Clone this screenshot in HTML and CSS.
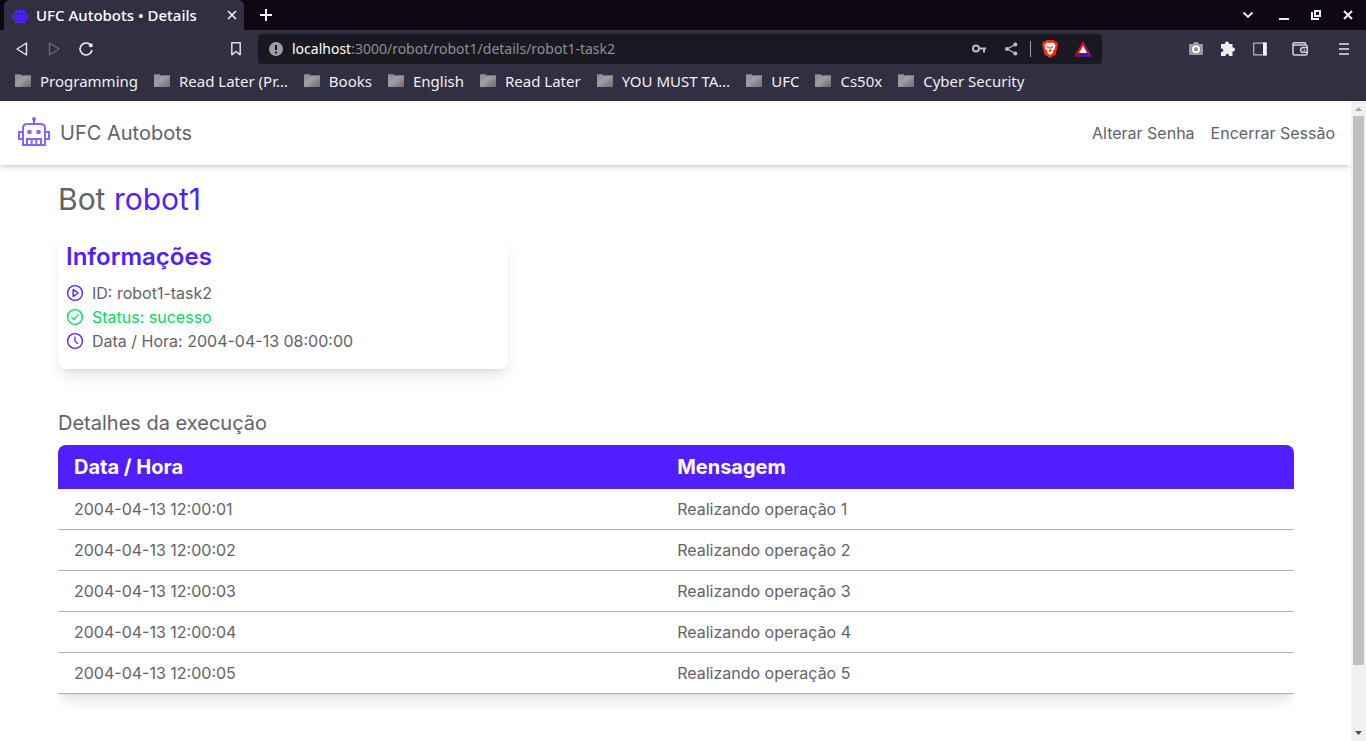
FILE: index.html
```html
<!DOCTYPE html>
<html lang="pt-BR">
<head>
<meta charset="utf-8">
<meta name="viewport" content="width=device-width, initial-scale=1">
<title>UFC Autobots • Details</title>
<link rel="stylesheet" href="styles.css">
</head>
<body>
<svg class="defs" width="0" height="0" aria-hidden="true">
  <defs>
    <linearGradient id="folder-fill" x1="0" y1="0" x2="1" y2="1">
      <stop offset="0" stop-color="#8b8993"/><stop offset=".45" stop-color="#a09da4"/><stop offset="1" stop-color="#6d6b6c"/>
    </linearGradient>
    <symbol id="folder" viewBox="0 0 18 16">
      <path d="M1 1h6v1h10v12H1z" fill="url(#folder-fill)"/>
      <path d="M1 1.500h6M7 2.500h10" stroke="#77757c"/>
    </symbol>
  </defs>
</svg>

<header class="browser">
  <div class="tabstrip">
    <div class="tab">
      <svg class="tab-icon" width="16" height="16" viewBox="0 0 16 16" fill="#4f20ff"><path d="M7.500 0h1v3H12q1 0 1 1v12H3V4q0-1 1-1h3.500zM0 7h1.200v5H0zM14.800 7H16v5h-1.200zM1 6h1v7H1zM14 6h1v7h-1z"/><path d="M5 6h2v2H5zM9 6h2v2H9zM5 10h1v1H5zM7 10h2v1H7zM10 10h1v1h-1zM5 13h1v1H5zM7.500 13h1v1h-1zM10 13h1v1h-1z" fill="#302080"/></svg>
      <span class="tab-title">UFC Autobots • Details</span>
      <button class="icon-btn" aria-label="Close tab"><svg width="10" height="10" viewBox="0 0 10 10" stroke="#f1f1f3" stroke-width="1.600"><path d="M1 1l8 8M9 1L1 9"/></svg></button>
    </div>
    <button class="icon-btn new-tab" aria-label="New tab"><svg width="12" height="12" viewBox="0 0 12 12" stroke="#fff" stroke-width="2"><path d="M6 0v12M0 6h12"/></svg></button>
    <div class="window-controls">
      <button class="icon-btn" aria-label="Search tabs"><svg width="12" height="12" viewBox="0 0 12 12" fill="none" stroke="#eee" stroke-width="1.800"><path d="M1.500 3.500L6 8l4.500-4.500"/></svg></button>
      <button class="icon-btn" aria-label="Minimize"><svg width="12" height="12" viewBox="0 0 12 12" fill="#eee"><path d="M1 9h10v2H1z"/></svg></button>
      <button class="icon-btn" aria-label="Restore"><svg width="12" height="12" viewBox="0 0 12 12" fill="none" stroke="#eee"><path d="M5 2h5v5H5z" stroke-width="2"/><path d="M2 3v7h7" stroke-width="2"/></svg></button>
      <button class="icon-btn" aria-label="Close window"><svg width="12" height="12" viewBox="0 0 12 12" stroke="#eee" stroke-width="2"><path d="M2 2l8 8M10 2l-8 8"/></svg></button>
    </div>
  </div>

  <div class="toolbar">
    <div class="nav-buttons">
      <button class="icon-btn" aria-label="Back"><svg width="16" height="16" viewBox="0 0 16 16" fill="none" stroke="#ececee" stroke-width="1.400" stroke-linejoin="round"><path d="M12.500 2v12L3 8z"/></svg></button>
      <button class="icon-btn" aria-label="Forward"><svg width="16" height="16" viewBox="0 0 16 16" fill="none" stroke="#6c6b78" stroke-width="1.400" stroke-linejoin="round"><path d="M3.500 2v12L13 8z"/></svg></button>
      <button class="icon-btn" aria-label="Reload"><svg width="16" height="16" viewBox="0 0 16 16" fill="none" stroke="#ececee" stroke-width="1.600"><path d="M11.700 3.200A6 6 0 1 0 14 9"/><circle cx="12.800" cy="4.200" r="2" fill="#ececee" stroke="none"/></svg></button>
    </div>
    <button class="icon-btn" aria-label="Bookmark"><svg width="16" height="16" viewBox="0 0 16 16" fill="none" stroke="#dedee2" stroke-width="1.500" stroke-linejoin="round"><path d="M3.800 1.800h8.400v12L8 10.500l-4.200 3.300z"/></svg></button>
    <div class="address">
      <svg width="14" height="14" viewBox="0 0 14 14"><circle cx="7" cy="7" r="7" fill="#9aa0a8"/><path d="M6 3h2v5H6zM6 9.500h2v2H6z" fill="#1a1921"/></svg>
      <span class="url"><b>localhost</b>:3000/robot/robot1/details/robot1-task2</span>
      <button class="icon-btn" aria-label="Passwords"><svg width="16" height="16" viewBox="0 0 16 16"><circle cx="5" cy="7.500" r="3" fill="none" stroke="#bdbdc1" stroke-width="2"/><path d="M8 6.500h7v2h-1v3h-2v-3H8z" fill="#bdbdc1"/></svg></button>
      <button class="icon-btn" aria-label="Share"><svg width="16" height="16" viewBox="0 0 16 16" fill="#bdbdc1"><path d="M12.500 3.500L4 8l8.500 4.500" fill="none" stroke="#bdbdc1" stroke-width="1.200"/><circle cx="12.300" cy="3.500" r="2"/><circle cx="4" cy="8" r="2"/><circle cx="12.300" cy="12.500" r="2"/></svg></button>
      <span class="divider"></span>
      <button class="icon-btn" aria-label="Brave Shields"><svg width="16" height="18" viewBox="0 0 16 18"><path d="M4.500 0h7L13 1.600l1.500-.2L16 4l-.7 2 .2 1-2 7.500L8 18l-5.500-3.500L.5 7l.2-1L0 4l1.500-2.600 1.500.2z" fill="#fb2b0a"/><path d="M5 2.500L8 3l3-.5L13.500 5l-.8 4-2 2 .3 1.500L8 15l-3-2.500.3-1.500-2-2-.8-4z" fill="#fff"/><path d="M4 6l3 .8-.5 1.600zM12 6l-3 .8.500 1.600zM7.300 7h1.400l-.3 2.500L9.700 11 8 12l-1.700-1 1.300-1.500z" fill="#fb2b0a"/></svg></button>
      <button class="icon-btn rewards" aria-label="Brave Rewards"><svg width="18" height="16" viewBox="0 0 18 16"><path d="M9 0L0 16l5.500-4L9 5z" fill="#f00"/><path d="M9 0v5l3.500 7 5.500 4z" fill="#9e1f63"/><path d="M0 16l5.500-4h7l5.500 4z" fill="#4b1690"/><path d="M9 4.800L13 12H5z" fill="#fff"/></svg></button>
    </div>
    <div class="extensions">
      <button class="icon-btn" aria-label="Screenshot"><svg width="16" height="16" viewBox="0 0 16 16"><path d="M2 3h3l1-2h4l1 2h3q1 0 1 1v9q0 1-1 1H2q-1 0-1-1V4q0-1 1-1z" fill="#98989c"/><circle cx="8" cy="8.300" r="3" fill="#8a8a8e" stroke="#f5f5f5" stroke-width="2"/></svg></button>
      <button class="icon-btn" aria-label="Extensions"><svg width="16" height="16" viewBox="0 0 16 16" fill="#eee"><path d="M1 3h4V2.600a2 2 0 0 1 4 0V3h3.500v3.500h.5a2 2 0 0 1 0 4h-.5V15H9v-.6a1.700 1.700 0 0 0-3.400 0v.6H1v-4h.6a1.800 1.800 0 0 0 0-3.600H1z"/></svg></button>
      <button class="icon-btn" aria-label="Side panel"><svg width="16" height="16" viewBox="0 0 16 16"><path d="M1.700 2.200h12.600v11.600H1.700z" fill="none" stroke="#b9b8bd" stroke-width="1.200"/><path d="M11 1.500h3.500v13H11z" fill="#f3f3f3"/></svg></button>
      <button class="icon-btn wallet" aria-label="Wallet"><svg width="16" height="16" viewBox="0 0 16 16" fill="none" stroke="#d2d1d6" stroke-width="1.500"><path d="M1 4V3q0-1.300 1.300-1.300h10.200q1 0 1 1V4M1 4h12.500q1.700 0 1.700 1.500v7q0 1.500-1.500 1.500H2.500Q1 14 1 12.500V3M15.200 6.500H11a2.400 2.400 0 0 0 0 4.800h4.200M11.500 8.900h1.500"/></svg></button>
      <button class="icon-btn menu" aria-label="Menu"><svg width="10" height="12" viewBox="0 0 10 12" stroke="#e7e7ea" stroke-width="1.500"><path d="M0 1h10M0 6h10M0 11h10"/></svg></button>
    </div>
  </div>

  <nav class="bookmarks" aria-label="Bookmarks">
    <button class="bookmark"><svg width="18" height="16"><use href="#folder"/></svg>Programming</button>
    <button class="bookmark"><svg width="18" height="16"><use href="#folder"/></svg>Read Later (Pr…</button>
    <button class="bookmark"><svg width="18" height="16"><use href="#folder"/></svg>Books</button>
    <button class="bookmark"><svg width="18" height="16"><use href="#folder"/></svg>English</button>
    <button class="bookmark"><svg width="18" height="16"><use href="#folder"/></svg>Read Later</button>
    <button class="bookmark"><svg width="18" height="16"><use href="#folder"/></svg>YOU MUST TA…</button>
    <button class="bookmark"><svg width="18" height="16"><use href="#folder"/></svg>UFC</button>
    <button class="bookmark"><svg width="18" height="16"><use href="#folder"/></svg>Cs50x</button>
    <button class="bookmark"><svg width="18" height="16"><use href="#folder"/></svg>Cyber Security</button>
  </nav>
</header>

<div class="viewport">
  <div class="page">
    <header class="site-header">
      <a class="brand" href="#">
        <svg width="32" height="32" viewBox="0 0 32 32" fill="none" stroke="#8763ff" stroke-width="2"><path d="M5 28V11q0-4 4.500-4h13Q27 7 27 11v17zM16 7V2M4.500 15H1v7h3.500M27.500 15H31v7h-3.500"/><path d="M9 28v-6h14v6M13.700 22v6M18.300 22v6"/><g fill="#8763ff" stroke="none"><circle cx="16" cy="2" r="2"/><circle cx="11.500" cy="15" r="2.300"/><circle cx="20.500" cy="15" r="2.300"/></g></svg>
        <span>UFC Autobots</span>
      </a>
      <nav class="site-nav">
        <a href="#">Alterar Senha</a>
        <a href="#">Encerrar Sessão</a>
      </nav>
    </header>

    <main class="content">
      <h1 class="title">Bot <span class="accent">robot1</span></h1>

      <section class="card">
        <h2>Informações</h2>
        <ul class="facts">
          <li><svg width="18" height="18" viewBox="0 0 18 18" fill="none" stroke="#511fff" stroke-width="1.400"><circle cx="9" cy="9" r="7.400"/><path d="M7.200 5.600v6.800l5-3.400z" stroke-linejoin="round"/></svg>ID: robot1-task2</li>
          <li class="success"><svg width="18" height="18" viewBox="0 0 18 18" fill="none" stroke="#06d85f" stroke-width="1.400"><circle cx="9" cy="9" r="7.400"/><path d="M5.500 9l2.500 2.600 4.500-5.200" stroke-width="1.200"/></svg>Status: sucesso</li>
          <li><svg width="18" height="18" viewBox="0 0 18 18" fill="none" stroke="#511fff" stroke-width="1.400"><circle cx="9" cy="9" r="7.400"/><path d="M9 4.500V9l2.800 2.800" stroke-width="1.200"/></svg>Data / Hora: 2004-04-13 08:00:00</li>
        </ul>
      </section>

      <section class="details">
        <h2>Detalhes da execução</h2>
        <div class="table-wrap">
          <table>
            <thead>
              <tr><th class="col-date" scope="col">Data / Hora</th><th scope="col">Mensagem</th></tr>
            </thead>
            <tbody>
              <tr><td>2004-04-13 12:00:01</td><td>Realizando operação 1</td></tr>
              <tr><td>2004-04-13 12:00:02</td><td>Realizando operação 2</td></tr>
              <tr><td>2004-04-13 12:00:03</td><td>Realizando operação 3</td></tr>
              <tr><td>2004-04-13 12:00:04</td><td>Realizando operação 4</td></tr>
              <tr><td>2004-04-13 12:00:05</td><td>Realizando operação 5</td></tr>
            </tbody>
          </table>
        </div>
      </section>
    </main>
  </div>

  <div class="scrollbar" aria-hidden="true">
    <svg width="15" height="15" viewBox="0 0 15 15"><path d="M4 10h7L7.500 6z" fill="#a3a3a3"/></svg>
    <div class="scroll-track"><div class="scroll-thumb"></div></div>
    <svg width="15" height="15" viewBox="0 0 15 15"><path d="M4 5h7L7.500 9z" fill="#505050"/></svg>
  </div>
</div>
</body>
</html>
```

FILE: styles.css
```css
* { box-sizing: border-box; }

body {
  margin: 0;
  min-height: 100vh;
  display: flex;
  flex-direction: column;
  background: #fff;
  color: #636367;
  font: 400 16px/24px Inter, "Liberation Sans", sans-serif;
}

h1, h2, ul { margin: 0; padding: 0; }
a { color: inherit; text-decoration: none; }
svg { display: block; flex: none; }
.defs { position: absolute; }

/* Browser frame */
.browser {
  background: #322f42;
  border-bottom: 1px solid #2c293b;
  color: #f0f0f2;
  font: 400 14px/20px "Noto Sans", "Open Sans", sans-serif;
}

.icon-btn {
  display: flex;
  align-items: center;
  justify-content: center;
  padding: 0;
  border: 0;
  background: none;
}

.tabstrip {
  display: flex;
  align-items: center;
  height: 30px;
  padding-left: 4px;
  background: #0d0714;
}

.tab {
  display: flex;
  align-items: center;
  align-self: stretch;
  gap: 8px;
  width: 240px;
  padding: 0 7px 0 8px;
  border-radius: 6px 6px 0 0;
  background: #322f42;
}

.tab-title {
  flex: 1;
  color: #fff;
  font-size: 15px;
  font-weight: 500;
  white-space: nowrap;
}
.new-tab { margin-left: 16px; }

.window-controls {
  display: flex;
  gap: 20px;
  margin-left: auto;
  padding-right: 12px;
}
.window-controls .icon-btn:first-child { margin-right: 4px; }

.toolbar {
  display: flex;
  align-items: center;
  padding: 4px 17px 3px 14px;
}

.nav-buttons { display: flex; gap: 16px; width: 214px; }

.address {
  display: flex;
  flex: 1;
  align-items: center;
  gap: 16px;
  height: 30px;
  margin-left: 14px;
  padding: 0 10px 0 11px;
  border-radius: 4px;
  background: #1a1921;
}

.url {
  flex: 1;
  margin-left: -7px;
  color: #8e8e96;
  white-space: nowrap;
}
.url b { font-weight: 400; color: #fff; }
.divider { width: 1px; height: 16px; margin: 0 -5px; background: #a3a3a9; }

.extensions {
  display: flex;
  align-items: center;
  gap: 16px;
  margin-left: 86px;
}
.wallet { margin-left: 8px; }
.menu { margin-left: 15px; }

.bookmarks {
  display: flex;
  gap: 15px;
  padding: 4px 14px 9px;
  font-size: 15px;
}

.bookmark {
  display: flex;
  align-items: center;
  gap: 8px;
  padding: 0;
  border: 0;
  background: none;
  color: inherit;
  font: inherit;
  white-space: nowrap;
}

/* Page */
.viewport { display: flex; flex: 1; }
.page { flex: 1; min-width: 0; overflow: hidden; }

.site-header {
  display: flex;
  align-items: center;
  justify-content: space-between;
  height: 64px;
  padding: 0 16px 0 18px;
  box-shadow: 0 4px 6px -1px rgba(0, 0, 0, .1), 0 2px 4px -2px rgba(0, 0, 0, .2);
}

.brand {
  display: flex;
  align-items: center;
  gap: 10px;
  font-size: 20px;
  line-height: 28px;
}

.site-nav { display: flex; gap: 16px; }

.content { padding: 16px 57px 16px 58px; }

.title { font-size: 30px; font-weight: 400; line-height: 36px; }
.accent { color: #511fff; }

.card {
  max-width: 450px;
  margin: 16px 0 40px;
  padding: 8px 8px 16px;
  border-radius: 8px;
  box-shadow: 0 10px 15px -3px rgba(0, 0, 0, .1), 0 4px 6px -4px rgba(0, 0, 0, .1);
}

.card h2 {
  margin-bottom: 8px;
  color: #511fff;
  font-size: 24px;
  font-weight: 600;
  line-height: 32px;
}

.facts { list-style: none; }
.facts li { display: flex; align-items: center; gap: 8px; }
.facts .success { color: #06d85f; }

.details h2 {
  margin-bottom: 8px;
  font-size: 20px;
  font-weight: 400;
  line-height: 28px;
}

.table-wrap { overflow: hidden; padding-bottom: 16px; }

table {
  width: 100%;
  border-collapse: separate;
  border-spacing: 0;
  border-radius: 8px 8px 0 0;
  box-shadow: 0 10px 15px -3px rgba(0, 0, 0, .1), 0 4px 6px -4px rgba(0, 0, 0, .1);
}

th, td { padding: 8px 16px; text-align: left; }

th {
  background: #511fff;
  color: #fff;
  font-size: 20px;
  font-weight: 700;
  line-height: 28px;
}
th:first-child { border-top-left-radius: 8px; }
th:last-child { border-top-right-radius: 8px; }
.col-date { width: 48.8%; }

td { border-bottom: 1px solid #adadaf; }

/* Scrollbar */
.scrollbar {
  display: flex;
  flex-direction: column;
  width: 15px;
  background: #f1f1f1;
}
.scroll-track { flex: 1; padding: 0 2px; }
.scroll-thumb { height: 90%; background: #c1c1c1; }
```
